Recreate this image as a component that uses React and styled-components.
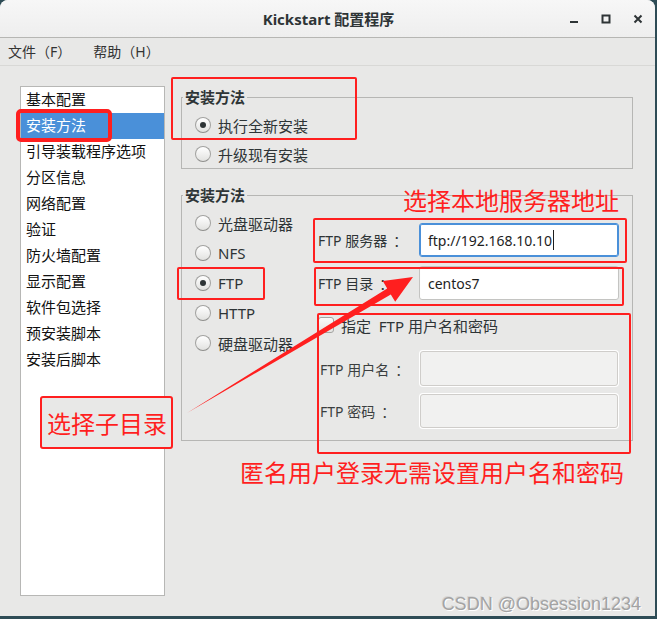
import { styled, createGlobalStyle } from "styled-components";

const UI_FONT = `"Noto Sans", "Noto Sans CJK SC", sans-serif`;
const RED = "#ff1f1f";

const GlobalStyle = createGlobalStyle`
  html, body {
    margin: 0;
    padding: 0;
    background: #2e4c56;
  }
  body {
    font-family: ${UI_FONT};
    color: #2e3436;
  }
  * { box-sizing: border-box; }
`;

const menuItems = ["文件（F）", "帮助（H）"];

const pages = [
  "基本配置",
  "安装方法",
  "引导装载程序选项",
  "分区信息",
  "网络配置",
  "验证",
  "防火墙配置",
  "显示配置",
  "软件包选择",
  "预安装脚本",
  "安装后脚本",
];

const sources = [
  { label: "光盘驱动器" },
  { label: "NFS" },
  { label: "FTP", checked: true },
  { label: "HTTP" },
  { label: "硬盘驱动器" },
];

const App = () => {
  return (
    <>
      <GlobalStyle />
      <Window>
        <TitleBar>
          <Title>Kickstart 配置程序</Title>
          <Controls>
            <ControlButton>
              <svg width="10" height="10" viewBox="0 0 10 10">
                <rect x="1" y="7" width="8" height="2" fill="#2e3436" />
              </svg>
            </ControlButton>
            <ControlButton>
              <svg width="10" height="10" viewBox="0 0 10 10">
                <rect x="1.5" y="1.5" width="7" height="7" fill="none" stroke="#2e3436" strokeWidth="2" />
              </svg>
            </ControlButton>
            <ControlButton>
              <svg width="10" height="10" viewBox="0 0 10 10">
                <path d="M1.5 1.5 L8.5 8.5 M8.5 1.5 L1.5 8.5" stroke="#2e3436" strokeWidth="2" />
              </svg>
            </ControlButton>
          </Controls>
        </TitleBar>

        <MenuBar>
          {menuItems.map(item => (
            <MenuItem key={item}>{item}</MenuItem>
          ))}
        </MenuBar>

        <Body>
          <Sidebar>
            {pages.map(page => (
              <SidebarItem key={page} $active={page === "安装方法"}>
                {page}
              </SidebarItem>
            ))}
          </Sidebar>

          <Pane>
            <Frame>
              <FrameTitle>安装方法</FrameTitle>
              <FrameBody>
                <RadioRow $height={28}>
                  <Radio $checked />
                  执行全新安装
                </RadioRow>
                <RadioRow $height={28}>
                  <Radio />
                  升级现有安装
                </RadioRow>
              </FrameBody>
            </Frame>

            <Frame>
              <FrameTitle>安装方法</FrameTitle>
              <MethodGrid>
                <div>
                  {sources.map(src => (
                    <RadioRow key={src.label} $height={30}>
                      <Radio $checked={src.checked} />
                      {src.label}
                    </RadioRow>
                  ))}
                </div>
                <FtpForm>
                  <FieldRow>
                    <FieldLabel>FTP 服务器<Colon>：</Colon></FieldLabel>
                    <Entry $focused>
                      ftp://192.168.10.10
                      <Caret />
                    </Entry>
                  </FieldRow>
                  <FieldRow>
                    <FieldLabel>FTP 目录<Colon>：</Colon></FieldLabel>
                    <Entry>centos7</Entry>
                  </FieldRow>
                  <CheckRow>
                    <CheckBox />
                    指定&nbsp;&nbsp;FTP 用户名和密码
                  </CheckRow>
                  <SubFields>
                    <FieldRow $sub $height={35}>
                      <FieldLabel $sub>FTP 用户名<Colon>：</Colon></FieldLabel>
                      <Entry $disabled />
                    </FieldRow>
                    <FieldRow $sub>
                      <FieldLabel $sub>FTP 密码<Colon>：</Colon></FieldLabel>
                      <Entry $disabled />
                    </FieldRow>
                  </SubFields>
                </FtpForm>
              </MethodGrid>
            </Frame>
          </Pane>
        </Body>

        <Arrow viewBox="0 0 655 616">
          <polygon
            points="187,413 387.2,288.4 382.8,281.1 413,277 395.2,301.7 390.8,294.4"
            fill={RED}
          />
        </Arrow>

        <Mark $x={16} $y={109} $w={96} $h={33} $thick={4} $radius={5} />
        <Mark $x={171} $y={77} $w={186} $h={63} />
        <Mark $x={177} $y={267} $w={88} $h={33} />
        <Mark $x={313} $y={218} $w={314} $h={45} />
        <Mark $x={314} $y={267} $w={310} $h={39} />
        <Mark $x={317} $y={313} $w={314} $h={141} />

        <Note $x={403} $y={186}>选择本地服务器地址</Note>
        <NoteBox>选择子目录</NoteBox>
        <Note $x={240} $y={458}>匿名用户登录无需设置用户名和密码</Note>

        <Watermark>CSDN @Obsession1234</Watermark>
      </Window>
    </>
  );
};

const Window = styled.div`
position: relative;
width: 655px;
height: 616px;
background: #e8e8e7;
border-radius: 8px 8px 0 0;
overflow: hidden;
display: flex;
flex-direction: column;
`
const TitleBar = styled.div`
position: relative;
height: 38px;
flex: none;
display: flex;
align-items: center;
justify-content: center;
padding-bottom: 1px;
background: linear-gradient(#f7f7f7, #eeeeee);
border-bottom: 1px solid #b6b6b3;
`
const Title = styled.div`
font-size: 15px;
font-weight: 700;
color: #2e3436;
padding-left: 2px;
`
const Controls = styled.div`
position: absolute;
right: 12px;
top: 0;
height: 37px;
display: flex;
align-items: center;
gap: 22px;
`
const ControlButton = styled.div`
width: 10px;
height: 10px;
display: flex;
`
const MenuBar = styled.div`
height: 28px;
flex: none;
display: flex;
align-items: center;
gap: 22px;
padding-left: 8px;
font-size: 14px;
color: #333;
border-bottom: 1px solid #d8d8d6;
`
const MenuItem = styled.span`
line-height: 16px;
`
const Body = styled.div`
flex: 1;
display: flex;
align-items: flex-start;
padding: 20px 0 0 20px;
gap: 16px;
`
const Sidebar = styled.ul`
margin: 0;
padding: 0;
list-style: none;
width: 145px;
height: 510px;
background: #ffffff;
border: 1px solid #b7b7b5;
`
const SidebarItem = styled.li`
height: 26px;
line-height: 25px;
padding-left: 5px;
font-size: 15px;
white-space: nowrap;
color: ${p => (p.$active ? "#ffffff" : "#111")};
background: ${p => (p.$active ? "#4a90d9" : "transparent")};
`
const Pane = styled.div`
width: 452px;
margin-top: 3px;
display: flex;
flex-direction: column;
gap: 18px;
`
const Frame = styled.fieldset`
margin: 0;
padding: 0;
border: 1px solid #b6b6b4;
min-width: 0;
`
const FrameTitle = styled.legend`
margin-left: 1px;
padding: 0 2px;
font-size: 15px;
line-height: 16px;
font-weight: 700;
color: #2e3436;
`
const FrameBody = styled.div`
display: flex;
flex-direction: column;
gap: 1px;
padding: 6px 0 0 13px;
`
const RadioRow = styled.div`
height: ${p => p.$height}px;
display: flex;
align-items: center;
gap: 7px;
font-size: 15px;
color: #2e3436;
`
const Radio = styled.span`
position: relative;
width: 16px;
height: 16px;
flex: none;
border-radius: 50%;
border: 1px solid #a2a2a0;
border-bottom-color: #8e8e8c;
background: linear-gradient(#ffffff, #e2e2e0);

&::after {
    content: "";
    display: ${p => (p.$checked ? "block" : "none")};
    position: absolute;
    left: 4px;
    top: 4px;
    width: 6px;
    height: 6px;
    border-radius: 50%;
    background: #2e3436;
}
`
const MethodGrid = styled.div`
display: grid;
grid-template-columns: 123px 1fr;
padding: 5px 0 12px 13px;
`
const FtpForm = styled.div`
margin-top: 15px;
display: flex;
flex-direction: column;
gap: 9px;
`
const FieldRow = styled.div`
height: ${p => p.$height || 34}px;
display: flex;
align-items: center;
padding-left: ${p => (p.$sub ? 2 : 0)}px;
`
const FieldLabel = styled.span`
width: ${p => (p.$sub ? 100 : 101)}px;
flex: none;
font-size: 14px;
white-space: nowrap;
color: ${p => (p.$sub ? "#3b3f40" : "#2e3436")};
`
const Colon = styled.span`
margin-left: 6px;
`
const Entry = styled.div`
width: ${p => (p.$disabled ? 198 : 200)}px;
height: 100%;
display: flex;
align-items: center;
padding-left: 8px;
font-size: 14px;
color: #1e1e1e;
border-radius: 3px;
background: ${p => (p.$disabled ? "#f1f1f0" : "#ffffff")};
border: 1px solid ${p => (p.$focused ? "#4a90d9" : p.$disabled ? "#cfcdca" : "#c4c4c2")};
box-shadow: ${p =>
    p.$focused
      ? "inset 0 0 0 1px #4a90d9"
      : p.$disabled
      ? "0 0 0 1px #ffffff"
      : "inset 0 1px 1px rgba(0,0,0,0.06)"};
`
const Caret = styled.span`
width: 1px;
height: 20px;
margin-left: 1px;
background: #1e1e1e;
`
const CheckRow = styled.div`
height: 32px;
display: flex;
align-items: center;
gap: 7px;
font-size: 15px;
color: #2e3436;
`
const CheckBox = styled.span`
width: 16px;
height: 16px;
flex: none;
border-radius: 3px;
border: 1px solid #a4a4a2;
background: linear-gradient(#fafafa, #e3e3e1);
`
const SubFields = styled.div`
margin-top: 1px;
display: flex;
flex-direction: column;
gap: 8px;
`
const Arrow = styled.svg`
position: absolute;
left: 0;
top: 0;
width: 655px;
height: 616px;
pointer-events: none;
`
const Mark = styled.div`
position: absolute;
left: ${p => p.$x}px;
top: ${p => p.$y}px;
width: ${p => p.$w}px;
height: ${p => p.$h}px;
border: ${p => p.$thick || 2}px solid ${RED};
border-radius: ${p => p.$radius || 2}px;
pointer-events: none;
`
const Note = styled.div`
position: absolute;
left: ${p => p.$x}px;
top: ${p => p.$y}px;
font-family: "Noto Sans CJK SC", sans-serif;
font-size: 24px;
line-height: 28px;
color: ${RED};
white-space: nowrap;
`
const NoteBox = styled.div`
position: absolute;
left: 40px;
top: 396px;
width: 133px;
height: 53px;
display: flex;
align-items: center;
padding-left: 5px;
font-family: "Noto Sans CJK SC", sans-serif;
font-size: 24px;
color: ${RED};
border: 2px solid ${RED};
border-radius: 3px;
background: #e8e8e7;
white-space: nowrap;
`
const Watermark = styled.div`
position: absolute;
right: 14px;
top: 593px;
font-family: "Liberation Sans", Arial, sans-serif;
font-size: 18px;
line-height: 22px;
color: #a3a3a3;
text-shadow: 1px 1px 0 #ffffff, -1px -1px 0 #8a8a8a33;
`

export default App;
